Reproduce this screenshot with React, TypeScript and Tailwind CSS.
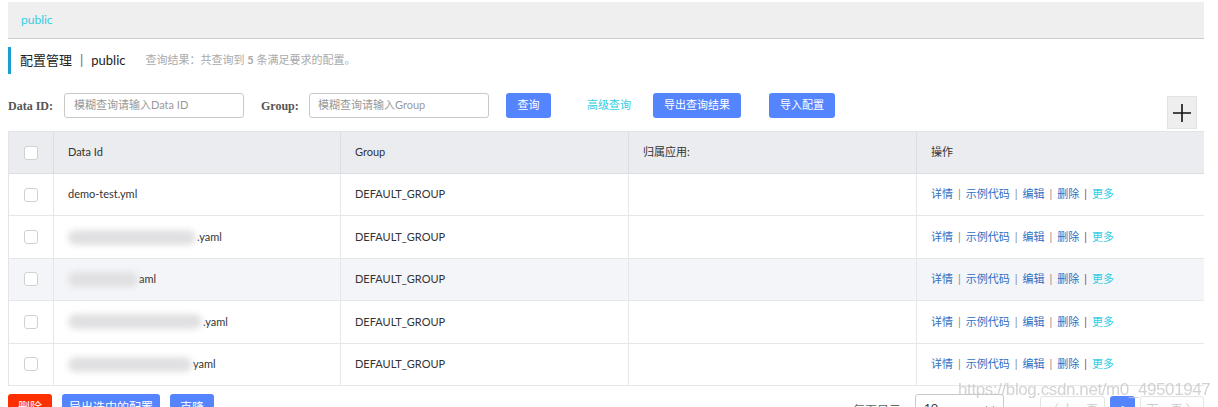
import React from 'react';

const font = { fontFamily: 'Lato, "Noto Sans CJK SC", sans-serif' };
const serif = { fontFamily: '"Liberation Serif", "Noto Sans CJK SC", serif' };

const rows = [
  { id: 'demo-test.yml', blur: 0, hover: false },
  { id: '.yaml', blur: 128, hover: false },
  { id: 'aml', blur: 70, hover: true },
  { id: '.yaml', blur: 134, hover: false },
  { id: 'yaml', blur: 124, hover: false },
];

const Checkbox: React.FC = () => (
  <span className="block w-[14px] h-[14px] rounded-[3px] border border-[#cfd1d6] bg-white" />
);

const Ops: React.FC = () => (
  <div className="flex items-center text-[11px] text-[#2f6fc2]">
    <span>详情</span>
    <span className="mx-[5px] text-[#888]">|</span>
    <span>示例代码</span>
    <span className="mx-[5px] text-[#888]">|</span>
    <span>编辑</span>
    <span className="mx-[5px] text-[#888]">|</span>
    <span>删除</span>
    <span className="mx-[5px] text-[#b03030]">|</span>
    <span className="text-[#33cde5]">更多</span>
  </div>
);

const App: React.FC = () => {
  return (
    <div className="relative w-[1218px] h-[407px] overflow-hidden bg-white text-[#333]" style={font}>
      {/* top namespace bar */}
      <div className="ml-2 mr-[14px] mt-[2px] h-[37px] bg-[#efefef] border-b border-[#cccccc] flex items-center pl-[13px]">
        <span className="text-[12px] text-[#33cde5]">public</span>
      </div>

      {/* title */}
      <div className="ml-2 mt-[8px] h-[27px] flex items-center border-l-[3px] border-[#1b9ed3] pl-[9px]">
        <span className="text-[13px] text-[#222]">配置管理</span>
        <span className="mx-[8px] text-[13px] text-[#666]">|</span>
        <span className="text-[13px] text-[#222]">public</span>
        <span className="ml-[20px] text-[11px] text-[#aaa]">
          查询结果：共查询到 <b className="font-bold">5</b> 条满足要求的配置。
        </span>
      </div>

      {/* search row */}
      <div className="ml-2 mr-[21px] mt-[19px] flex items-start">
        <div className="flex items-center h-[25px]">
          <span className="w-[56px] text-[12px] font-bold text-[#555]" style={serif}>Data ID:</span>
          <div className="w-[180px] h-[25px] border border-[#c9c9c9] rounded-[3px] flex items-center px-[9px] text-[11px] text-[#999]">模糊查询请输入Data ID</div>
          <span className="ml-[17px] w-[48px] text-[12px] font-bold text-[#555]" style={serif}>Group:</span>
          <div className="w-[180px] h-[25px] border border-[#c9c9c9] rounded-[3px] flex items-center px-[8px] text-[11px] text-[#999]">模糊查询请输入Group</div>
          <button className="ml-[17px] w-[45px] h-[25px] rounded-[3px] bg-[#5584ff] text-white text-[11px]">查询</button>
          <span className="ml-[36px] text-[11px] text-[#33cde5]">高级查询</span>
          <button className="ml-[22px] w-[88px] h-[25px] rounded-[3px] bg-[#5584ff] text-white text-[11px]">导出查询结果</button>
          <button className="ml-[28px] w-[66px] h-[25px] rounded-[3px] bg-[#5584ff] text-white text-[11px]">导入配置</button>
        </div>
        <div className="ml-auto mt-[3px] w-[30px] h-[33px] bg-[#eeeeee] border border-[#e2e2e2] flex items-center justify-center">
          <svg width="20" height="20" viewBox="0 0 20 20"><path d="M10 1v18M1 10h18" stroke="#111" strokeWidth="1.6" /></svg>
        </div>
      </div>

      {/* table */}
      <div className="ml-2 mr-[14px] mt-[2px] border-t border-l border-[#e3e4e8] text-[11px]">
        <div className="flex h-[42px] bg-[#ebecf0] border-b border-[#dcdee3] items-center">
          <div className="w-[45px] h-full flex items-center justify-center border-r border-[#dcdee3]"><Checkbox /></div>
          <div className="w-[287px] h-full flex items-center pl-[14px] border-r border-[#dcdee3]">Data Id</div>
          <div className="w-[288px] h-full flex items-center pl-[14px] border-r border-[#dcdee3]">Group</div>
          <div className="w-[288px] h-full flex items-center pl-[14px] border-r border-[#dcdee3]">归属应用:</div>
          <div className="flex-1 h-full flex items-center pl-[14px]">操作</div>
        </div>
        {rows.map((r, i) => (
          <div key={i} className={`flex h-[42.4px] items-center border-b border-[#e6e7eb] ${r.hover ? 'bg-[#f4f5f8]' : 'bg-white'}`}>
            <div className="w-[45px] h-full flex items-center justify-center border-r border-[#e6e7eb]"><Checkbox /></div>
            <div className="w-[287px] h-full flex items-center pl-[14px] border-r border-[#e6e7eb]">
              {r.blur > 0 && (
                <span className="block h-[15px] rounded-full bg-[#e0e0e2] blur-[3px] mr-[1px]" style={{ width: r.blur }} />
              )}
              <span>{r.id}</span>
            </div>
            <div className="w-[288px] h-full flex items-center pl-[14px] border-r border-[#e6e7eb]">DEFAULT_GROUP</div>
            <div className="w-[288px] h-full border-r border-[#e6e7eb]" />
            <div className="flex-1 h-full flex items-center pl-[14px]"><Ops /></div>
          </div>
        ))}
      </div>

      {/* bottom bar */}
      <div className="ml-2 mr-[14px] mt-[8px] flex items-start">
        <button className="w-[44px] h-[28px] rounded-[3px] bg-[#ff3000] text-white text-[12px]">删除</button>
        <button className="ml-[10px] w-[98px] h-[28px] rounded-[3px] bg-[#5584ff] text-white text-[12px]">导出选中的配置</button>
        <button className="ml-[10px] w-[44px] h-[28px] rounded-[3px] bg-[#5584ff] text-white text-[12px]">克隆</button>
        <div className="ml-auto flex items-start">
          <span className="mt-[8px] text-[12px] text-[#666]">每页显示：</span>
          <div className="ml-[2px] w-[89px] h-[28px] border border-[#c9c9c9] rounded-[3px] flex items-center justify-between px-[8px] text-[12px]">
            <span>10</span>
            <svg width="10" height="10" viewBox="0 0 10 10"><path d="M1 3l4 4 4-4" stroke="#999" fill="none" /></svg>
          </div>
          <div className="ml-[36px] mt-[2px] w-[65px] h-[28px] border border-[#e3e3e3] rounded-[3px] flex items-center justify-center text-[12px] text-[#ccc]">〈 上一页</div>
          <div className="ml-[5px] mt-[2px] w-[25px] h-[28px] rounded-[3px] bg-[#5584ff] flex items-center justify-center text-[12px] text-white">1</div>
          <div className="ml-[5px] mt-[2px] w-[64px] h-[28px] border border-[#e3e3e3] rounded-[3px] flex items-center justify-center text-[12px] text-[#ccc]">下一页 〉</div>
        </div>
      </div>

      {/* watermark */}
      <span
        className="absolute left-[958px] top-[377px] text-[17px] tracking-[-0.4px] text-[#c8c8c8] opacity-80 pointer-events-none"
        style={{ fontFamily: '"Liberation Sans", Arial, sans-serif' }}
      >
        https://blog.csdn.net/m0_49501947
      </span>
    </div>
  );
};

export default App;
